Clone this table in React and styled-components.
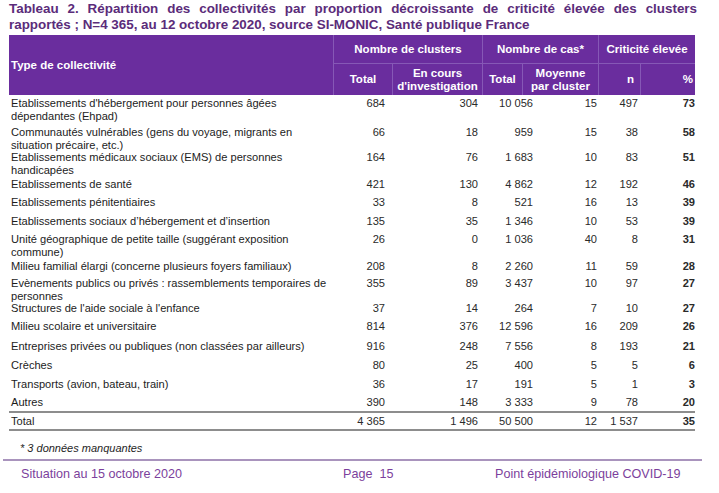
import React from "react";
import styled, { createGlobalStyle } from "styled-components";

const GlobalStyle = createGlobalStyle`
  html, body { margin: 0; padding: 0; background: #ffffff; }
  body { font-family: "Liberation Sans", Arial, sans-serif; color: #1e1e1e; }
`;

const Page = styled.div`
  width: 719px;
  height: 493px;
  overflow: hidden;
  display: flex;
  flex-direction: column;
`;

const Title = styled.div`
  padding: 1px 22px 0 9px;
  color: #5b2c7a;
  font-weight: bold;
  font-size: 13.4px;
  line-height: 16px;
`;

const TitleLine = styled.div`
  text-align: ${(p) => (p.$justify ? "justify" : "left")};
  text-align-last: ${(p) => (p.$justify ? "justify" : "left")};
  white-space: nowrap;
`;

const cols = "324px 59px 90px 40px 76px 42px 55px";
const bodyCols = "324px 52px 93px 55px 64px 41px 57px";

const Header = styled.div`
  margin: 2px 0 0 9px;
  width: 686px;
  display: grid;
  grid-template-columns: ${cols};
  grid-template-rows: 28px 32px;
  background: #6a2d9e;
  color: #ffffff;
  font-weight: bold;
  font-size: 11.5px;
  line-height: 12.5px;
`;

const HCell = styled.div`
  display: flex;
  align-items: center;
  justify-content: ${(p) => p.$align || "center"};
  text-align: ${(p) => (p.$align === "flex-end" ? "right" : p.$align === "flex-start" ? "left" : "center")};
  padding: ${(p) => p.$pad || "0"};
  grid-column: ${(p) => p.$col || "auto"};
  grid-row: ${(p) => p.$row || "auto"};
  border-left: ${(p) => (p.$noLeft ? "none" : "1px solid #8658b6")};
  border-top: ${(p) => (p.$top ? "1px solid #8658b6" : "none")};
  white-space: nowrap;
`;

const Body = styled.div`
  margin-left: 9px;
  width: 686px;
  display: flex;
  flex-direction: column;
  font-size: 11.1px;
  line-height: 13px;
`;

const Row = styled.div`
  display: grid;
  grid-template-columns: ${bodyCols};
  height: ${(p) => p.$h}px;
  box-sizing: border-box;
  padding-top: 2px;
  ${(p) =>
    p.$total &&
    `
    border-top: 2px solid #8d8d8d;
    border-bottom: 2px solid #8d8d8d;
    padding-top: 2px;
  `}
`;

const Label = styled.div`
  padding-left: 2px;
  white-space: nowrap;
  color: #1c1c1c;
`;

const Num = styled.div`
  text-align: right;
  white-space: nowrap;
  color: #2a2a2a;
  font-weight: ${(p) => (p.$bold ? "bold" : "normal")};
`;

const Footnote = styled.div`
  padding: 11px 0 0 20px;
  font-size: 11px;
  line-height: 13px;
  font-style: italic;
  color: #1e1e1e;
`;

const FooterRule = styled.div`
  margin: 4px 0 0 3px;
  width: 699px;
  border-top: 2px solid #a994bd;
`;

const Footer = styled.div`
  display: grid;
  grid-template-columns: 322px 152px 1fr;
  padding: 6px 0 0 21px;
  font-size: 12.6px;
  line-height: 15px;
  color: #7c3f9c;
`;

const FooterItem = styled.span`
  white-space: nowrap;
`;

const rows = [
  { label: ["Etablissements d'hébergement pour personnes âgées", "dépendantes (Ehpad)"], v: ["684", "304", "10 056", "15", "497", "73"], h: 29 },
  { label: ["Communautés vulnérables (gens du voyage, migrants en", "situation précaire, etc.)"], v: ["66", "18", "959", "15", "38", "58"], h: 25 },
  { label: ["Etablissements médicaux sociaux (EMS) de personnes", "handicapées"], v: ["164", "76", "1 683", "10", "83", "51"], h: 27 },
  { label: ["Etablissements de santé"], v: ["421", "130", "4 862", "12", "192", "46"], h: 18 },
  { label: ["Etablissements pénitentiaires"], v: ["33", "8", "521", "16", "13", "39"], h: 19 },
  { label: ["Etablissements sociaux d’hébergement et d’insertion"], v: ["135", "35", "1 346", "10", "53", "39"], h: 18 },
  { label: ["Unité géographique de petite taille (suggérant exposition", "commune)"], v: ["26", "0", "1 036", "40", "8", "31"], h: 27 },
  { label: ["Milieu familial élargi (concerne plusieurs foyers familiaux)"], v: ["208", "8", "2 260", "11", "59", "28"], h: 17 },
  { label: ["Evènements publics ou privés : rassemblements temporaires de", "personnes"], v: ["355", "89", "3 437", "10", "97", "27"], h: 25 },
  { label: ["Structures de l'aide sociale à l'enfance"], v: ["37", "14", "264", "7", "10", "27"], h: 18 },
  { label: ["Milieu scolaire et universitaire"], v: ["814", "376", "12 596", "16", "209", "26"], h: 20 },
  { label: ["Entreprises privées ou publiques (non classées par ailleurs)"], v: ["916", "248", "7 556", "8", "193", "21"], h: 19 },
  { label: ["Crèches"], v: ["80", "25", "400", "5", "5", "6"], h: 19 },
  { label: ["Transports (avion, bateau, train)"], v: ["36", "17", "191", "5", "1", "3"], h: 18 },
  { label: ["Autres"], v: ["390", "148", "3 333", "9", "78", "20"], h: 17 },
];

const total = { label: ["Total"], v: ["4 365", "1 496", "50 500", "12", "1 537", "35"] };

function DataRow({ r, isTotal }) {
  return (
    <Row $h={isTotal ? 20 : r.h} $total={isTotal}>
      <Label>
        {r.label.map((l, i) => (
          <React.Fragment key={i}>
            {i > 0 && <br />}
            {l}
          </React.Fragment>
        ))}
      </Label>
      {r.v.map((x, i) => (
        <Num key={i} $bold={i === 5}>
          {x}
        </Num>
      ))}
    </Row>
  );
}

export default function App() {
  return (
    <>
      <GlobalStyle />
      <Page>
        <Title>
          <TitleLine $justify>
            Tableau 2. Répartition des collectivités par proportion décroissante de criticité élevée des clusters
          </TitleLine>
          <TitleLine>rapportés ; N=4 365, au 12 octobre 2020, source SI-MONIC, Santé publique France</TitleLine>
        </Title>
        <Header>
          <HCell $col="1" $row="1 / span 2" $align="flex-start" $pad="0 0 0 2px" $noLeft>
            Type de collectivité
          </HCell>
          <HCell $col="2 / span 2" $row="1">Nombre de clusters</HCell>
          <HCell $col="4 / span 2" $row="1">Nombre de cas*</HCell>
          <HCell $col="6 / span 2" $row="1">Criticité élevée</HCell>
          <HCell $col="2" $row="2" $top>Total</HCell>
          <HCell $col="3" $row="2" $top>
            En cours
            <br />
            d'investigation
          </HCell>
          <HCell $col="4" $row="2" $top>Total</HCell>
          <HCell $col="5" $row="2" $top>
            Moyenne
            <br />
            par cluster
          </HCell>
          <HCell $col="6" $row="2" $top $align="flex-end" $pad="0 6px 0 0">n</HCell>
          <HCell $col="7" $row="2" $top $align="flex-end" $pad="0 2px 0 0">%</HCell>
        </Header>
        <Body>
          {rows.map((r, i) => (
            <DataRow key={i} r={r} />
          ))}
          <DataRow r={total} isTotal />
        </Body>
        <Footnote>* 3 données manquantes</Footnote>
        <FooterRule />
        <Footer>
          <FooterItem>Situation au 15 octobre 2020</FooterItem>
          <FooterItem>Page&nbsp;&nbsp;15</FooterItem>
          <FooterItem>Point épidémiologique COVID-19</FooterItem>
        </Footer>
      </Page>
    </>
  );
}
